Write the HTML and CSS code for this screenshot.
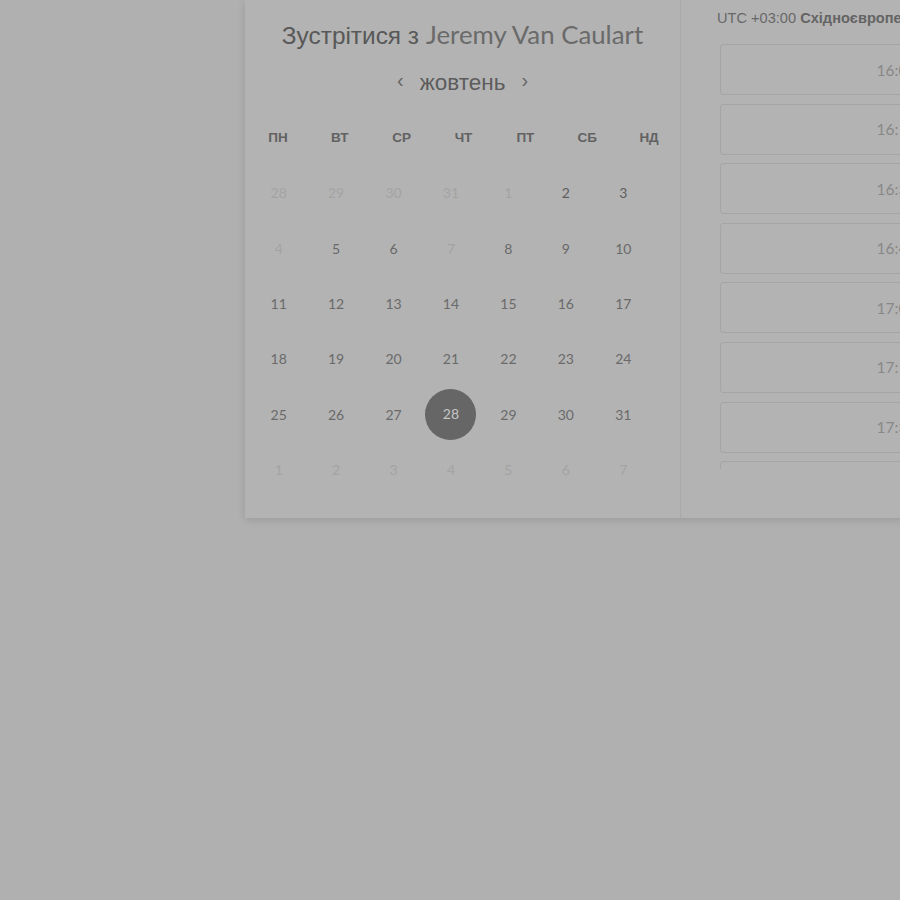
FILE: index.html
```html
<!DOCTYPE html>
<html lang="uk">
<head>
<meta charset="utf-8">
<title>Зустрітися з Jeremy Van Caulart</title>
<link rel="stylesheet" href="styles.css">
</head>
<body>
<div class="widget">
  <section class="calendar">
    <h1 class="title"><span class="title-lead">Зустрітися з</span> <span class="title-name">Jeremy Van Caulart</span></h1>
    <div class="month-nav">
      <span class="chev">‹</span>
      <span class="month">жовтень</span>
      <span class="chev">›</span>
    </div>
    <div class="weekdays">
      <span>ПН</span><span>ВТ</span><span>СР</span><span>ЧТ</span><span>ПТ</span><span>СБ</span><span>НД</span>
    </div>
    <div class="dates">
      <span class="d muted">28</span><span class="d muted">29</span><span class="d muted">30</span><span class="d muted">31</span><span class="d muted">1</span><span class="d strong">2</span><span class="d strong">3</span>
      <span class="d muted">4</span><span class="d">5</span><span class="d">6</span><span class="d muted">7</span><span class="d">8</span><span class="d">9</span><span class="d">10</span>
      <span class="d">11</span><span class="d">12</span><span class="d">13</span><span class="d">14</span><span class="d">15</span><span class="d">16</span><span class="d">17</span>
      <span class="d">18</span><span class="d">19</span><span class="d">20</span><span class="d">21</span><span class="d">22</span><span class="d">23</span><span class="d">24</span>
      <span class="d">25</span><span class="d">26</span><span class="d">27</span><span class="d selected"><span class="dot">28</span></span><span class="d">29</span><span class="d">30</span><span class="d">31</span>
      <span class="d muted">1</span><span class="d muted">2</span><span class="d muted">3</span><span class="d muted">4</span><span class="d muted">5</span><span class="d muted">6</span><span class="d muted">7</span>
    </div>
  </section>
  <section class="slots-panel">
    <div class="tz">UTC +03:00 <b>Східноєвропейський час</b></div>
    <div class="slots">
      <div class="slot">16:00</div>
      <div class="slot">16:15</div>
      <div class="slot">16:30</div>
      <div class="slot">16:45</div>
      <div class="slot">17:00</div>
      <div class="slot">17:15</div>
      <div class="slot">17:30</div>
      <div class="slot">17:45</div>
    </div>
  </section>
</div>
</body>
</html>
```
FILE: styles.css
```css
html, body {
  margin: 0;
  padding: 0;
}
body {
  background: #b0b0b0;
  width: 900px;
  height: 900px;
  overflow: hidden;
  font-family: "Liberation Sans", Arial, sans-serif;
}
.widget {
  margin-left: 245px;
  display: flex;
  width: 880px;
  height: 518px;
  background: #b3b3b3;
  box-shadow: 0 2px 8px rgba(0, 0, 0, 0.12);
}
.calendar {
  width: 435px;
  flex: none;
  padding-top: 19px;
  box-sizing: border-box;
}
.title {
  margin: 0;
  height: 30px;
  line-height: 30px;
  text-align: center;
  font-weight: normal;
  font-size: 25px;
  white-space: nowrap;
}
.title-lead {
  font-family: "Liberation Sans", Arial, sans-serif;
  color: #585858;
  font-size: 24.4px;
}
.title-name {
  font-family: Lato, "Open Sans", sans-serif;
  color: #6a6a6a;
  font-weight: 400;
  font-size: 25.8px;
}
.month-nav {
  margin-top: 21px;
  height: 24px;
  display: flex;
  justify-content: center;
  align-items: center;
  gap: 14px;
  color: #5c5c5c;
}
.month {
  font-size: 22.5px;
  padding: 0 2px;
  position: relative;
  top: 1px;
}
.chev {
  font-size: 20px;
  color: #666;
  position: relative;
  top: -2px;
}
.weekdays {
  margin-top: 16px;
  display: grid;
  grid-template-columns: repeat(7, 1fr);
  height: 55px;
  align-items: center;
  text-align: center;
  font-size: 13.5px;
  font-weight: bold;
  color: #626262;
  padding-left: 2px;
}
.dates {
  margin-left: 5px;
  width: 402px;
  display: grid;
  grid-template-columns: repeat(7, 1fr);
  grid-auto-rows: 55.4px;
  align-items: center;
  justify-items: center;
  font-family: Lato, "Open Sans", sans-serif;
  font-size: 14px;
  color: #6a6a6a;
}
.d.muted {
  color: #a3a3a3;
}
.d.strong {
  color: #5e5e5e;
}
.dot {
  display: flex;
  width: 51px;
  height: 51px;
  border-radius: 50%;
  background: #666666;
  color: #c4c4c4;
  align-items: center;
  justify-content: center;
  padding-bottom: 2px;
  box-sizing: border-box;
}
.slots-panel {
  flex: 1;
  border-left: 1px solid #a9a9a9;
  padding-left: 36px;
  padding-top: 10px;
  box-sizing: border-box;
}
.tz {
  font-size: 14.6px;
  color: #686868;
  height: 16px;
  line-height: 16px;
  white-space: nowrap;
}
.tz b {
  color: #646464;
}
.slots {
  margin-top: 18px;
  margin-left: 3px;
  height: 425px;
  overflow: hidden;
  display: flex;
  flex-direction: column;
  gap: 8.6px;
}
.slot {
  flex: none;
  width: 353px;
  height: 51px;
  box-sizing: border-box;
  border: 1px solid #a5a5a5;
  border-radius: 3px;
  display: flex;
  align-items: center;
  justify-content: center;
  font-family: Lato, "Open Sans", sans-serif;
  font-size: 15.5px;
  color: #888888;
}
```
